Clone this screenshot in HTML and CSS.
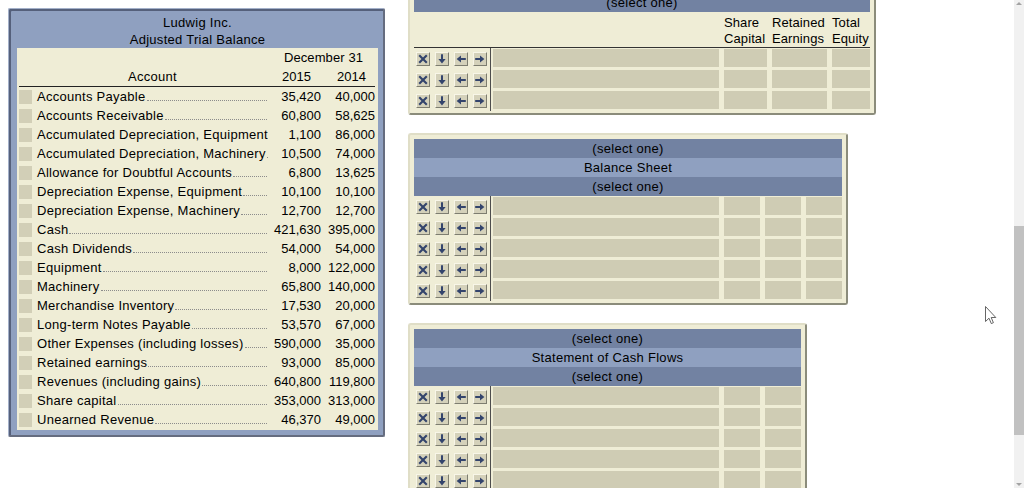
FILE: index.html
```html
<!DOCTYPE html>
<html>
<head>
<meta charset="utf-8">
<link rel="stylesheet" href="styles.css">
</head>
<body>
<svg class="defs" width="0" height="0">
  <symbol id="i-x" viewBox="0 0 12 12"><path d="M2.2 2.2L9.8 9.8M9.8 2.2L2.2 9.8" stroke="#33446c" stroke-width="2.1" fill="none"/></symbol>
  <symbol id="i-down" viewBox="0 0 12 12"><path d="M6 1.2V7" stroke="#33446c" stroke-width="2"/><path d="M2.4 6H9.6L6 10.4Z" fill="#33446c"/></symbol>
  <symbol id="i-left" viewBox="0 0 12 12"><path d="M5.4 6H10.8" stroke="#33446c" stroke-width="2"/><path d="M6 2.4V9.6L1.6 6Z" fill="#33446c"/></symbol>
  <symbol id="i-right" viewBox="0 0 12 12"><path d="M1.2 6H6.6" stroke="#33446c" stroke-width="2"/><path d="M6 2.4V9.6L10.4 6Z" fill="#33446c"/></symbol>
</svg>

<div class="page">
  <section class="tb">
    <header class="tb-head">
      <div>Ludwig Inc.</div>
      <div>Adjusted Trial Balance</div>
    </header>
    <div class="tb-body">
      <div class="tb-row tb-date"><span class="date">December 31</span></div>
      <div class="tb-row tb-cols"><span></span><span class="acct-h">Account</span><span class="y15">2015</span><span class="y14">2014</span></div>
      <div class="tb-row"><i class="sq"></i><span class="lbl"><span>Accounts Payable</span><b class="lead"></b></span><span class="num">35,420</span><span class="num">40,000</span></div>
      <div class="tb-row"><i class="sq"></i><span class="lbl"><span>Accounts Receivable</span><b class="lead"></b></span><span class="num">60,800</span><span class="num">58,625</span></div>
      <div class="tb-row"><i class="sq"></i><span class="lbl"><span>Accumulated Depreciation, Equipment</span><b class="lead"></b></span><span class="num">1,100</span><span class="num">86,000</span></div>
      <div class="tb-row"><i class="sq"></i><span class="lbl"><span>Accumulated Depreciation, Machinery</span><b class="lead"></b></span><span class="num">10,500</span><span class="num">74,000</span></div>
      <div class="tb-row"><i class="sq"></i><span class="lbl"><span>Allowance for Doubtful Accounts</span><b class="lead"></b></span><span class="num">6,800</span><span class="num">13,625</span></div>
      <div class="tb-row"><i class="sq"></i><span class="lbl"><span>Depreciation Expense, Equipment</span><b class="lead"></b></span><span class="num">10,100</span><span class="num">10,100</span></div>
      <div class="tb-row"><i class="sq"></i><span class="lbl"><span>Depreciation Expense, Machinery</span><b class="lead"></b></span><span class="num">12,700</span><span class="num">12,700</span></div>
      <div class="tb-row"><i class="sq"></i><span class="lbl"><span>Cash</span><b class="lead"></b></span><span class="num">421,630</span><span class="num">395,000</span></div>
      <div class="tb-row"><i class="sq"></i><span class="lbl"><span>Cash Dividends</span><b class="lead"></b></span><span class="num">54,000</span><span class="num">54,000</span></div>
      <div class="tb-row"><i class="sq"></i><span class="lbl"><span>Equipment</span><b class="lead"></b></span><span class="num">8,000</span><span class="num">122,000</span></div>
      <div class="tb-row"><i class="sq"></i><span class="lbl"><span>Machinery</span><b class="lead"></b></span><span class="num">65,800</span><span class="num">140,000</span></div>
      <div class="tb-row"><i class="sq"></i><span class="lbl"><span>Merchandise Inventory</span><b class="lead"></b></span><span class="num">17,530</span><span class="num">20,000</span></div>
      <div class="tb-row"><i class="sq"></i><span class="lbl"><span>Long-term Notes Payable</span><b class="lead"></b></span><span class="num">53,570</span><span class="num">67,000</span></div>
      <div class="tb-row"><i class="sq"></i><span class="lbl"><span>Other Expenses (including losses)</span><b class="lead"></b></span><span class="num">590,000</span><span class="num">35,000</span></div>
      <div class="tb-row"><i class="sq"></i><span class="lbl"><span>Retained earnings</span><b class="lead"></b></span><span class="num">93,000</span><span class="num">85,000</span></div>
      <div class="tb-row"><i class="sq"></i><span class="lbl"><span>Revenues (including gains)</span><b class="lead"></b></span><span class="num">640,800</span><span class="num">119,800</span></div>
      <div class="tb-row"><i class="sq"></i><span class="lbl"><span>Share capital</span><b class="lead"></b></span><span class="num">353,000</span><span class="num">313,000</span></div>
      <div class="tb-row"><i class="sq"></i><span class="lbl"><span>Unearned Revenue</span><b class="lead"></b></span><span class="num">46,370</span><span class="num">49,000</span></div>
    </div>
  </section>

  <div class="right">
    <section class="panel eq">
      <div class="bar dark">(select one)</div>
      <div class="eq-head">
        <span class="h c1">Share<br>Capital</span>
        <span class="h c2">Retained<br>Earnings</span>
        <span class="h c3">Total<br>Equity</span>
      </div>
      <div class="rows">
        <div class="row"><div class="btns"><span class="btn"><svg><use href="#i-x"/></svg></span><span class="btn"><svg><use href="#i-down"/></svg></span><span class="btn"><svg><use href="#i-left"/></svg></span><span class="btn"><svg><use href="#i-right"/></svg></span></div><div class="cells"><span class="c w"></span><span class="c c1"></span><span class="c c2"></span><span class="c c3"></span></div></div>
        <div class="row"><div class="btns"><span class="btn"><svg><use href="#i-x"/></svg></span><span class="btn"><svg><use href="#i-down"/></svg></span><span class="btn"><svg><use href="#i-left"/></svg></span><span class="btn"><svg><use href="#i-right"/></svg></span></div><div class="cells"><span class="c w"></span><span class="c c1"></span><span class="c c2"></span><span class="c c3"></span></div></div>
        <div class="row"><div class="btns"><span class="btn"><svg><use href="#i-x"/></svg></span><span class="btn"><svg><use href="#i-down"/></svg></span><span class="btn"><svg><use href="#i-left"/></svg></span><span class="btn"><svg><use href="#i-right"/></svg></span></div><div class="cells"><span class="c w"></span><span class="c c1"></span><span class="c c2"></span><span class="c c3"></span></div></div>
      </div>
    </section>

    <section class="panel">
      <div class="bar dark">(select one)</div>
      <div class="bar light">Balance Sheet</div>
      <div class="bar dark">(select one)</div>
      <div class="rows">
        <div class="row"><div class="btns"><span class="btn"><svg><use href="#i-x"/></svg></span><span class="btn"><svg><use href="#i-down"/></svg></span><span class="btn"><svg><use href="#i-left"/></svg></span><span class="btn"><svg><use href="#i-right"/></svg></span></div><div class="cells"><span class="c w"></span><span class="c n"></span><span class="c n"></span><span class="c n"></span></div></div>
        <div class="row"><div class="btns"><span class="btn"><svg><use href="#i-x"/></svg></span><span class="btn"><svg><use href="#i-down"/></svg></span><span class="btn"><svg><use href="#i-left"/></svg></span><span class="btn"><svg><use href="#i-right"/></svg></span></div><div class="cells"><span class="c w"></span><span class="c n"></span><span class="c n"></span><span class="c n"></span></div></div>
        <div class="row"><div class="btns"><span class="btn"><svg><use href="#i-x"/></svg></span><span class="btn"><svg><use href="#i-down"/></svg></span><span class="btn"><svg><use href="#i-left"/></svg></span><span class="btn"><svg><use href="#i-right"/></svg></span></div><div class="cells"><span class="c w"></span><span class="c n"></span><span class="c n"></span><span class="c n"></span></div></div>
        <div class="row"><div class="btns"><span class="btn"><svg><use href="#i-x"/></svg></span><span class="btn"><svg><use href="#i-down"/></svg></span><span class="btn"><svg><use href="#i-left"/></svg></span><span class="btn"><svg><use href="#i-right"/></svg></span></div><div class="cells"><span class="c w"></span><span class="c n"></span><span class="c n"></span><span class="c n"></span></div></div>
        <div class="row"><div class="btns"><span class="btn"><svg><use href="#i-x"/></svg></span><span class="btn"><svg><use href="#i-down"/></svg></span><span class="btn"><svg><use href="#i-left"/></svg></span><span class="btn"><svg><use href="#i-right"/></svg></span></div><div class="cells"><span class="c w"></span><span class="c n"></span><span class="c n"></span><span class="c n"></span></div></div>
      </div>
    </section>

    <section class="panel">
      <div class="bar dark">(select one)</div>
      <div class="bar light">Statement of Cash Flows</div>
      <div class="bar dark">(select one)</div>
      <div class="rows">
        <div class="row"><div class="btns"><span class="btn"><svg><use href="#i-x"/></svg></span><span class="btn"><svg><use href="#i-down"/></svg></span><span class="btn"><svg><use href="#i-left"/></svg></span><span class="btn"><svg><use href="#i-right"/></svg></span></div><div class="cells"><span class="c w"></span><span class="c n"></span><span class="c n"></span></div></div>
        <div class="row"><div class="btns"><span class="btn"><svg><use href="#i-x"/></svg></span><span class="btn"><svg><use href="#i-down"/></svg></span><span class="btn"><svg><use href="#i-left"/></svg></span><span class="btn"><svg><use href="#i-right"/></svg></span></div><div class="cells"><span class="c w"></span><span class="c n"></span><span class="c n"></span></div></div>
        <div class="row"><div class="btns"><span class="btn"><svg><use href="#i-x"/></svg></span><span class="btn"><svg><use href="#i-down"/></svg></span><span class="btn"><svg><use href="#i-left"/></svg></span><span class="btn"><svg><use href="#i-right"/></svg></span></div><div class="cells"><span class="c w"></span><span class="c n"></span><span class="c n"></span></div></div>
        <div class="row"><div class="btns"><span class="btn"><svg><use href="#i-x"/></svg></span><span class="btn"><svg><use href="#i-down"/></svg></span><span class="btn"><svg><use href="#i-left"/></svg></span><span class="btn"><svg><use href="#i-right"/></svg></span></div><div class="cells"><span class="c w"></span><span class="c n"></span><span class="c n"></span></div></div>
        <div class="row"><div class="btns"><span class="btn"><svg><use href="#i-x"/></svg></span><span class="btn"><svg><use href="#i-down"/></svg></span><span class="btn"><svg><use href="#i-left"/></svg></span><span class="btn"><svg><use href="#i-right"/></svg></span></div><div class="cells"><span class="c w"></span><span class="c n"></span><span class="c n"></span></div></div>
      </div>
    </section>
  </div>
</div>

<svg class="cursor" width="12" height="19" viewBox="0 0 12 19"><path d="M0.5 0.5V15.5L4 12.2L6.3 17.6L8.4 16.7L6.2 11.5H10.8Z" fill="#fff" stroke="#555" stroke-width="0.9"/></svg>

<div class="sb">
  <span class="sb-up"></span>
  <span class="sb-thumb"></span>
  <span class="sb-down"></span>
</div>
</body>
</html>
```

FILE: styles.css
```css
* { box-sizing: border-box; }

html, body {
  margin: 0;
  width: 1024px;
  height: 488px;
  overflow: hidden;
  background: #fff;
}

body {
  font-family: "Liberation Sans", Arial, sans-serif;
  font-size: 13px;
  letter-spacing: 0.28px;
  color: #000;
  position: relative;
}

.defs { position: absolute; width: 0; height: 0; }

.page {
  display: flex;
  align-items: flex-start;
  gap: 23px;
  padding: 8px 0 0 8px;
}

/* Trial balance panel */
.tb {
  width: 377px;
  background: #8fa0c0;
  border: 1px solid #a3b0c9;
  border-right: 2px solid #656c7f;
  border-bottom: 2px solid #656c7f;
  border-radius: 2px;
  box-shadow: inset 2px 2px 0 #55607b;
  padding: 0 5px 5px 8px;
}

.tb-head {
  padding-top: 5px;
  text-align: center;
  line-height: 17px;
}

.tb-body {
  background: #efedd6;
  padding: 0 3px 1px 2px;
}

.tb-row {
  display: grid;
  grid-template-columns: 13px 236px 53px 54px;
  align-items: center;
  height: 19px;
  line-height: 19px;
}

.tb-date .date {
  grid-column: 3 / 5;
  text-align: center;
  padding-left: 4px;
  letter-spacing: 0.1px;
}

.tb-cols {
  border-bottom: 1px solid #222;
  height: 20px;
}

.acct-h {
  text-align: center;
  padding-left: 5px;
}

.y15 { text-align: right; padding-right: 10px; letter-spacing: 0; }
.y14 { text-align: right; padding-right: 9px; letter-spacing: 0; }

.sq {
  display: block;
  width: 13px;
  height: 14px;
  background: #d2cfb7;
}

.lbl {
  display: flex;
  align-items: flex-end;
  padding-left: 5px;
  padding-right: 1px;
  height: 19px;
  white-space: nowrap;
  overflow: hidden;
}

.lead {
  flex: 1;
  min-width: 0;
  border-bottom: 1px dotted #8c8c8c;
  margin: 0 0 5px 1px;
}

.num { text-align: right; white-space: nowrap; letter-spacing: 0; }

/* Right-hand worksheets */
.right {
  display: flex;
  flex-direction: column;
  align-items: flex-start;
  gap: 18px;
  margin-top: -21px;
}

.panel {
  background: #efedd6;
  border: 2px solid;
  border-color: #e0dec7 #8b8c7b #8b8c7b #e0dec7;
  border-radius: 3px;
  padding: 4px 4px 2px 4px;
}

.bar {
  height: 19px;
  line-height: 19px;
  text-align: center;
  white-space: nowrap;
}
.bar.dark { background: #7282a2; }
.bar.light { background: #8fa0c0; }

.eq-head {
  display: flex;
  gap: 5px;
  padding: 3px 0 0 310px;
  height: 36px;
  border-bottom: 1px solid #333;
  line-height: 16px;
  letter-spacing: 0.1px;
}
.eq-head .h { white-space: nowrap; }

.c1 { width: 43px; }
.c2 { width: 55px; }
.c3 { width: 38px; }

.row {
  display: flex;
  height: 21px;
}

.btns {
  width: 77px;
  border-right: 1px solid #4d4d4d;
  display: flex;
  align-items: center;
  gap: 5px;
  padding-left: 2px;
}

.btn {
  display: block;
  width: 14px;
  height: 14px;
  background: #d4d1ba;
  border: 1px solid;
  border-color: #f8f6e8 #7d7d70 #7d7d70 #f8f6e8;
}
.btn svg { display: block; width: 12px; height: 12px; }

.cells {
  display: flex;
  gap: 5px;
  padding: 1px 0 2px 2px;
}

.c {
  display: block;
  height: 18px;
  background: #cfccb4;
}
.c.w { width: 226px; }
.c.n { width: 36px; }

/* mouse pointer */
.cursor {
  position: absolute;
  left: 985px;
  top: 306px;
}

/* fake scrollbar */
.sb {
  position: absolute;
  top: 0;
  right: 0;
  width: 10px;
  height: 488px;
  background: #f1f1f1;
}
.sb-thumb {
  position: absolute;
  left: 0;
  right: 0;
  top: 226px;
  height: 209px;
  background: #c1c1c1;
}
.sb-up, .sb-down {
  position: absolute;
  left: 2px;
  width: 0;
  height: 0;
  border-left: 3px solid transparent;
  border-right: 3px solid transparent;
}
.sb-up { top: 2px; border-bottom: 3px solid #a3a3a3; }
.sb-down { bottom: 2px; border-top: 3px solid #a3a3a3; }
```
